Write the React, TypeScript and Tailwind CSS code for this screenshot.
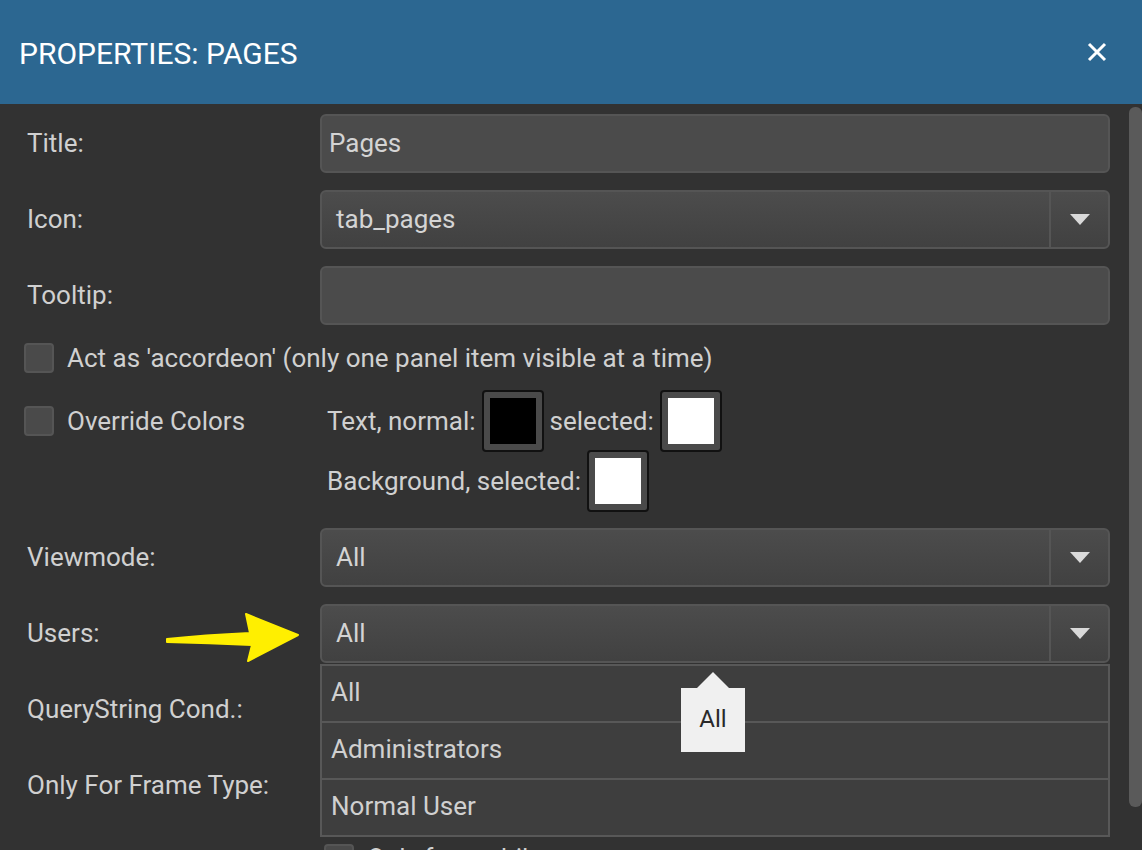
import React from "react";

const font = { fontFamily: "Roboto, 'Noto Sans', sans-serif" };

function Caret() {
  return (
    <svg width="20" height="12" viewBox="0 0 20 12" className="block">
      <path d="M0 0 L20 0 L10 11 Z" fill="#d9d9d9" />
    </svg>
  );
}

function TextInput({ value }: { value?: string }) {
  return (
    <div className="h-[59px] flex items-center rounded-[6px] border-2 border-[#555] bg-[#4b4b4b] pl-[7px] text-[26px] text-[#d4d4d4]">
      {value}
    </div>
  );
}

function Select({ value }: { value?: string }) {
  return (
    <div className="h-[59px] flex rounded-[6px] border-2 border-[#555] bg-gradient-to-b from-[#4c4c4c] to-[#414141] text-[26px] text-[#d4d4d4]">
      <div className="flex-1 flex items-center pl-[14px]">{value}</div>
      <div className="w-[59px] border-l-2 border-[#555] flex items-center justify-center">
        <Caret />
      </div>
    </div>
  );
}

function Checkbox() {
  return <div className="w-[30px] h-[30px] shrink-0 rounded-[4px] border-2 border-[#555] bg-[#4a4a4a]" />;
}

function Swatch({ color }: { color: string }) {
  return (
    <div className="w-[62px] h-[62px] shrink-0 rounded-[4px] border-2 border-[#111] bg-[#4a4a4a] p-[6px]">
      <div className={`w-full h-full ${color}`} />
    </div>
  );
}

function Row({ label, children }: { label: string; children?: React.ReactNode }) {
  return (
    <div className="flex items-center">
      <div className="w-[320px] shrink-0 pl-[27px] text-[26px] text-[#d0d0d0]">{label}</div>
      <div className="w-[790px]">{children}</div>
    </div>
  );
}

export default function App() {
  return (
    <div className="w-[1142px] h-[850px] overflow-hidden bg-[#323232] flex flex-col" style={font}>
      {/* Header */}
      <header className="h-[104px] shrink-0 bg-[#2c6791] flex items-center justify-between pl-[19px] pr-[35px]">
        <h1 className="text-[30px] text-white pt-[2px]">PROPERTIES: PAGES</h1>
        <svg width="20" height="20" viewBox="0 0 20 20">
          <path d="M2 2 L18 18 M18 2 L2 18" stroke="white" strokeWidth="3" />
        </svg>
      </header>

      <div className="flex-1 flex relative">
        <div className="flex-1 flex flex-col pt-[10px]">
          <div className="flex flex-col gap-[17px]">
            <Row label="Title:">
              <TextInput value="Pages" />
            </Row>
            <Row label="Icon:">
              <Select value="tab_pages" />
            </Row>
            <Row label="Tooltip:">
              <TextInput />
            </Row>
          </div>

          <div className="flex items-center gap-[13px] pl-[24px] mt-[17px] text-[26px] leading-[32px] text-[#d0d0d0]">
            <Checkbox />
            <span>Act as 'accordeon' (only one panel item visible at a time)</span>
          </div>

          <div className="flex mt-[16px] text-[26px] text-[#d0d0d0]">
            <div className="w-[327px] shrink-0 pl-[24px] pt-[16px] flex items-start gap-[13px]">
              <Checkbox />
              <span className="leading-[30px]">Override Colors</span>
            </div>
            <div className="flex flex-col">
              <div className="flex items-center gap-[6px]">
                <span>Text, normal:</span>
                <Swatch color="bg-black" />
                <span>selected:</span>
                <Swatch color="bg-white" />
              </div>
              <div className="flex items-center gap-[6px] -mt-[2px]">
                <span>Background, selected:</span>
                <Swatch color="bg-white" />
              </div>
            </div>
          </div>

          <div className="flex flex-col gap-[17px] mt-[16px]">
            <Row label="Viewmode:">
              <Select value="All" />
            </Row>
            <Row label="Users:">
              <Select value="All" />
            </Row>
            <Row label="QueryString Cond.:">
              <TextInput />
            </Row>
            <Row label="Only For Frame Type:">
              <Select />
            </Row>
          </div>

          <div className="flex items-center gap-[13px] pl-[324px] mt-[24px] text-[26px] text-[#d0d0d0]">
            <Checkbox />
            <span>Only for mobile</span>
          </div>
        </div>

        {/* Scrollbar */}
        <div className="w-[32px] shrink-0 flex justify-end pt-[3px]">
          <div className="w-[13px] h-[700px] rounded-[6px] bg-[#5a5a5a]" />
        </div>

        {/* Yellow arrow annotation */}
        <svg className="absolute left-[164px] top-[505px]" width="136" height="54" viewBox="0 0 136 54">
          <path
            d="M3 30 Q40 26 86 24 L82 5 L134 26 L84 52 L88 36 Q45 34 3 33 Z"
            fill="#ffef00"
            stroke="#ffef00"
            strokeWidth="2"
            strokeLinejoin="round"
          />
        </svg>

        {/* Open dropdown list */}
        <div className="absolute left-[320px] top-[560px] w-[790px] border-2 border-[#585858] bg-[#3e3e3e] text-[26px] text-[#d0d0d0]">
          <div className="h-[57px] flex items-center pl-[9px] pb-[3px] border-b-2 border-[#585858]">All</div>
          <div className="h-[57px] flex items-center pl-[9px] pb-[3px] border-b-2 border-[#585858]">Administrators</div>
          <div className="h-[55px] flex items-center pl-[9px] pb-[3px]">Normal User</div>
        </div>

        {/* Tooltip */}
        <div className="absolute left-[681px] top-[568px] flex flex-col items-center">
          <svg width="32" height="16" viewBox="0 0 32 16" className="block">
            <path d="M0 16 L16 0 L32 16 Z" fill="#f0f0f0" />
          </svg>
          <div className="w-[64px] h-[64px] bg-[#f0f0f0] flex items-center justify-center pb-[3px] text-[24px] text-[#2a2a2a]">
            All
          </div>
        </div>
      </div>
    </div>
  );
}
